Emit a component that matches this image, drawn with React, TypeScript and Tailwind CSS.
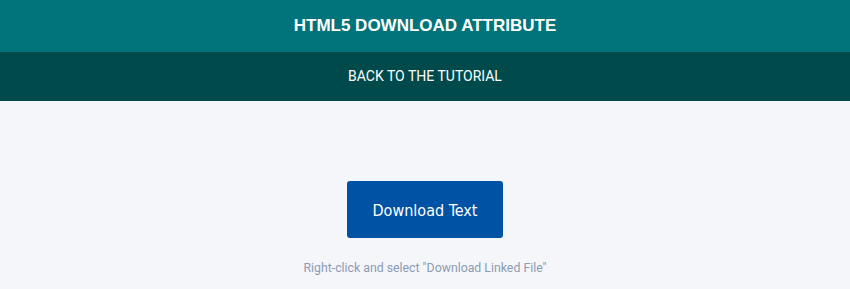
export default function App() {
  return (
    <div className="min-h-[289px] w-full bg-[#f4f6fa] font-['Roboto',sans-serif]">
      <div className="flex h-[52px] items-center justify-center bg-[#00747a]">
        <h1 className="font-['Liberation_Sans',sans-serif] text-[17px] font-bold text-white">HTML5 DOWNLOAD ATTRIBUTE</h1>
      </div>
      <div className="flex h-[49px] items-center justify-center bg-[#004a4c]">
        <a className="text-[14px] text-white">BACK TO THE TUTORIAL</a>
      </div>
      <div className="flex flex-col items-center pt-[80px]">
        <a className="flex h-[57px] w-[156px] items-center justify-center rounded-[3px] bg-[#0052a4] pt-[2px] font-['DejaVu_Sans_Condensed','DejaVu_Sans',sans-serif] text-[16px] text-white">
          Download Text
        </a>
        <p className="mt-[21px] text-[12.3px] text-[#8c9bb3]">Right-click and select "Download Linked File"</p>
      </div>
    </div>
  );
}
